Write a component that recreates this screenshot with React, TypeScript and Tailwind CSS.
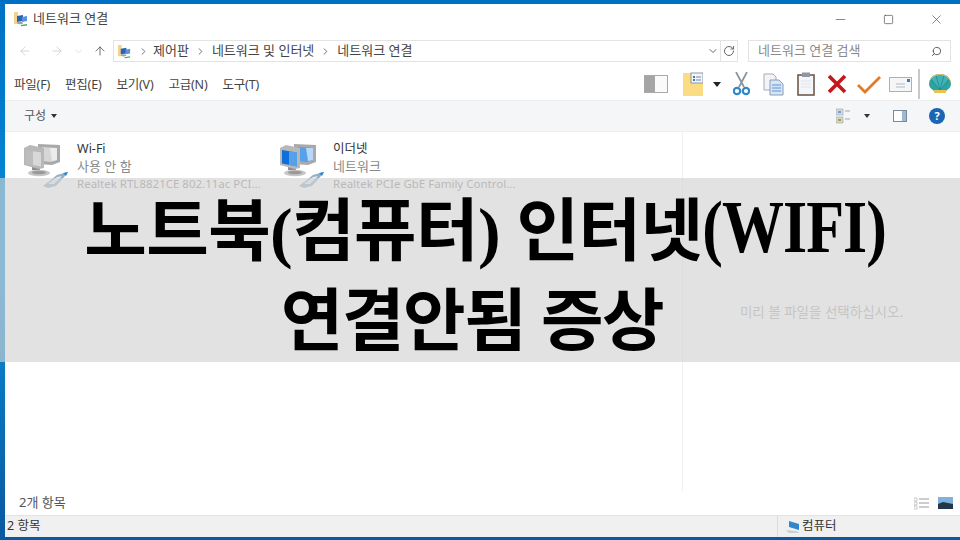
import React from "react";
import { ArrowLeft, ArrowRight, ArrowUp, ChevronDown, ChevronRight, RotateCw, Search, Minus, Square, X } from "lucide-react";

const sans = { fontFamily: '"Noto Sans","Noto Sans CJK KR",sans-serif' };

function NetFolder({ size = 16 }: { size?: number }) {
  return (
    <svg width={size} height={size} viewBox="0 0 16 16" className="shrink-0">
      <path d="M1 1h4v12H1z" fill="#f0d58a" />
      <path d="M4 5l6-1v6l-6 1z" fill="#2b62b8" />
      <path d="M9 6l5-1v5l-5 1z" fill="#5a92d8" />
      <ellipse cx="7" cy="12" rx="3" ry="1.2" fill="#9aa4ae" />
      <path d="M8 14l6-1v1.5l-6 .8z" fill="#3da86a" />
    </svg>
  );
}

function Computers({ blue }: { blue?: boolean }) {
  const back = blue ? "#5aa0e6" : "#d6d6d6";
  const backLight = blue ? "#b7d8f6" : "#ececec";
  const front = blue ? "#0f6fd8" : "#bdbdbd";
  const frontLight = blue ? "#6fb2f0" : "#e2e2e2";
  return (
    <svg width="50" height="50" viewBox="0 0 50 50" className="shrink-0">
      <path d="M16 5l22 1v17l-8 3-14-1z" fill="#a9a9a9" />
      <path d="M20 8l15 1v12l-6 2-9-1z" fill={back} />
      <path d="M28 9l7 0v12l-5 1z" fill={backLight} />
      <path d="M2 9l6-3 14 3v20l-5 1L2 26z" fill="#b8b8b8" />
      <path d="M4 11l15 2.5v14L4 24.5z" fill={front} />
      <path d="M11 12.2l8 1.3v14l-8-1.5z" fill={frontLight} opacity="0.75" />
      <path d="M10 28l8 2v2l-8-1z" fill="#8f8f8f" />
      <ellipse cx="17" cy="34" rx="11" ry="3.2" fill="#c6c6c6" />
      <ellipse cx="17" cy="33.5" rx="7" ry="1.8" fill="#9a9a9a" />
      <path d="M21 47l14-11 11-3-3 4-9 10-8 2z" fill="#8fb0c8" />
      <path d="M26 45l9-7 5-1-8 8z" fill="#e6eef4" />
      <path d="M41 34l5-1-2 4z" fill="#2a86cf" />
    </svg>
  );
}

function Item({ name, status, dev, blue }: { name: string; status: string; dev: string; blue?: boolean }) {
  return (
    <div className="flex w-[256px] gap-[5px]">
      <Computers blue={blue} />
      <div className="flex flex-col text-[13px] leading-[17.5px] pt-[1px]">
        <span className="text-[#333] text-[12.5px]">{name}</span>
        <span className="text-[#8a8a8a]">{status}</span>
        <span className="text-[#8a8a8a] text-[11.5px] whitespace-nowrap">{dev}</span>
      </div>
    </div>
  );
}

function Tools() {
  return (
    <div className="flex items-center h-full">
      <svg width="24" height="18" viewBox="0 0 24 18" className="mr-[15px]">
        <rect x="0.5" y="0.5" width="23" height="17" fill="#fafafa" stroke="#a8a8a8" />
        <rect x="1" y="1" width="10" height="16" fill="#a5a5a5" />
      </svg>
      <svg width="20" height="24" viewBox="0 0 20 24" className="mr-[10px]">
        <path d="M0 1h8v2h12v21H0z" fill="#fcdc83" />
        <rect x="8" y="1" width="12" height="10" fill="#f3f5f7" stroke="#8b99a6" />
        <path d="M10 4h2v2h-2zM10 7h2v2h-2z" fill="#3a78c2" />
        <path d="M13 5h5M13 8h5" stroke="#6a8ab0" />
      </svg>
      <svg width="8" height="5" viewBox="0 0 8 5" className="mr-[12px]"><path d="M0 0h8L4 5z" fill="#222" /></svg>
      <svg width="17" height="24" viewBox="0 0 17 24" className="mr-[13px]">
        <path d="M3 0l8 15M14 0L6 15" stroke="#8d959c" strokeWidth="1.8" fill="none" />
        <circle cx="4" cy="19" r="3.2" fill="none" stroke="#2f88c8" strokeWidth="2.2" />
        <circle cx="13" cy="19" r="3.2" fill="none" stroke="#2f88c8" strokeWidth="2.2" />
      </svg>
      <svg width="21" height="23" viewBox="0 0 21 23" className="mr-[13px]">
        <path d="M1 1h9l3 3v13H1z" fill="#f2f4f7" stroke="#a4adb8" />
        <path d="M7 7h9l4 4v11H7z" fill="#d7e5f6" stroke="#8a9db5" />
        <path d="M9 12h9M9 15h9M9 18h9" stroke="#5b93d6" />
      </svg>
      <svg width="18" height="24" viewBox="0 0 18 24" className="mr-[12px]">
        <rect x="1" y="3" width="16" height="20" fill="#f4f6f9" stroke="#6e5a4b" strokeWidth="1.6" />
        <rect x="5" y="0.5" width="8" height="4.5" fill="#8f98a2" />
        <path d="M4 9h10M4 12h10M4 15h10" stroke="#dfe5ec" />
      </svg>
      <svg width="20" height="20" viewBox="0 0 20 20" className="mr-[10px]">
        <path d="M2 2l16 16M18 2L2 18" stroke="#c4161c" strokeWidth="3.6" />
      </svg>
      <svg width="24" height="19" viewBox="0 0 24 19" className="mr-[8px]">
        <path d="M1 10l7 7L23 2" stroke="#e07b2a" strokeWidth="2.8" fill="none" />
      </svg>
      <svg width="23" height="15" viewBox="0 0 23 15" className="mr-[6px]">
        <rect x="0.5" y="0.5" width="22" height="14" fill="#f5f6f8" stroke="#a9b2bb" />
        <path d="M7 7h9M7 10h9" stroke="#b4bcc5" />
        <rect x="18" y="2" width="3" height="3" fill="#3a78c2" />
      </svg>
      <div className="w-[2px] h-[30px] bg-[#c8c8c8] mr-[8px]" />
      <svg width="24" height="22" viewBox="0 0 24 22">
        <path d="M12 1c6 0 11 4 11 10 0 3-2 5-4 6l-2 3H7l-2-3C3 16 1 14 1 11 1 5 6 1 12 1z" fill="#2fa3a0" />
        <path d="M12 17L3 5c2-3 5-4 9-4s7 1 9 4z" fill="#48b7c4" opacity="0.7" />
        <path d="M12 17L8 2M12 17l4-15M12 17L3 7M12 17l9-10" stroke="#1f8a8c" strokeWidth="0.8" />
        <path d="M7 20h10l2-3H5z" fill="#e9c44c" />
        <path d="M12 1c6 0 11 4 11 10l-1-3C20 4 16 2 12 2S4 4 2 8l-1 3C1 5 6 1 12 1z" fill="#e6c15c" />
      </svg>
    </div>
  );
}

export default function App() {
  return (
    <div className="relative w-[960px] h-[540px] overflow-hidden bg-gradient-to-b from-[#0070c4] via-[#0a8ed8] to-[#0a58a0] pl-[5px] pt-[4px] pb-[3px]" style={sans}>
      <div className="bg-white w-[955px] h-[533px] flex flex-col text-[#333]">
        <div className="h-[30px] flex items-center pl-[8px] shrink-0">
          <NetFolder />
          <span className="ml-[4px] text-[13px] text-[#444]">네트워크 연결</span>
          <div className="ml-auto flex items-center text-[#444]">
            <Minus size={15} strokeWidth={1} className="mr-[35px]" />
            <Square size={11} strokeWidth={1.4} className="mr-[35px]" />
            <X size={15} strokeWidth={1} className="mr-[16px]" />
          </div>
        </div>
        <div className="h-[34px] flex items-center shrink-0 pl-[13px] text-[#c4c4c4]">
          <ArrowLeft size={14} strokeWidth={1.2} />
          <ArrowRight size={14} strokeWidth={1.2} className="ml-[18px]" />
          <ChevronDown size={11} strokeWidth={1.2} className="ml-[9px]" />
          <ArrowUp size={14} strokeWidth={1.4} className="ml-[9px] text-[#555]" />
          <div className="ml-[6px] w-[625px] h-[22px] border border-[#e3e3e3] flex items-center pl-[3px] text-[13px] text-[#444]">
            <NetFolder size={15} />
            <ChevronRight size={11} className="ml-[6px] text-[#666]" />
            <span className="ml-[4px]">제어판</span>
            <ChevronRight size={11} className="ml-[6px] text-[#666]" />
            <span className="ml-[6px]">네트워크 및 인터넷</span>
            <ChevronRight size={11} className="ml-[6px] text-[#666]" />
            <span className="ml-[6px]">네트워크 연결</span>
            <ChevronDown size={12} className="ml-auto mr-[1px] text-[#666]" />
            <div className="w-[17px] h-full border-l border-[#e3e3e3] flex items-center justify-center">
              <RotateCw size={12} className="text-[#666]" />
            </div>
          </div>
          <div className="ml-[10px] w-[203px] h-[22px] border border-[#e3e3e3] flex items-center pl-[9px] pr-[8px] text-[13px] text-[#8a8a8a]">
            <span>네트워크 연결 검색</span>
            <Search size={11} strokeWidth={2} className="ml-auto text-[#555] -scale-x-100" />
          </div>
        </div>
        <div className="h-[32px] flex items-center shrink-0 pl-[9px] pr-[8px] text-[12.5px] text-[#444]">
          <div className="flex gap-[15px] pt-[3px] tracking-[-0.2px]">
            <span>파일(F)</span><span>편집(E)</span><span>보기(V)</span><span>고급(N)</span><span>도구(T)</span>
          </div>
          <div className="ml-auto h-full"><Tools /></div>
        </div>
        <div className="h-[32px] flex items-center shrink-0 bg-[#f5f6f7] border-y border-[#efefef] pl-[19px] text-[12px] text-[#555]">
          <span>구성</span>
          <svg width="6" height="4" viewBox="0 0 6 4" className="ml-[5px]"><path d="M0 0h6L3 4z" fill="#333" /></svg>
          <div className="ml-auto flex items-center pr-[15px]">
            <svg width="15" height="16" viewBox="0 0 15 16" className="mr-[13px]">
              <rect x="0" y="1" width="7" height="6" fill="#cfdbe6" stroke="#8d9aa6" strokeWidth="0.5" />
              <rect x="0" y="9" width="7" height="6" fill="#dcd9b8" stroke="#8d9aa6" strokeWidth="0.5" />
              <path d="M2 4h3" stroke="#2a5e9e" />
              <path d="M2 12h3" stroke="#5a6b3a" />
              <path d="M9 3h5M9 11h5" stroke="#a5a5a5" />
            </svg>
            <svg width="6" height="4" viewBox="0 0 6 4" className="mr-[23px]"><path d="M0 0h6L3 4z" fill="#333" /></svg>
            <svg width="14" height="12" viewBox="0 0 14 12" className="mr-[22px]">
              <rect x="0.5" y="0.5" width="13" height="11" fill="#fff" stroke="#7b8a9a" />
              <rect x="9" y="1" width="4" height="10" fill="#9db8d4" />
            </svg>
            <div className="w-[16px] h-[16px] rounded-full bg-[#1a66b5] text-white text-[11px] font-bold flex items-center justify-center">?</div>
          </div>
        </div>
        <div className="flex-1 flex min-h-0">
          <div className="w-[678px] flex pt-[7px] pl-[17px] border-r border-[#f0f0f0]">
            <Item name="Wi-Fi" status="사용 안 함" dev="Realtek RTL8821CE 802.11ac PCI..." />
            <Item name="이더넷" status="네트워크" dev="Realtek PCIe GbE Family Control..." blue />
          </div>
          <div className="flex-1 flex items-center justify-center pt-[1px]">
            <span className="text-[13.5px] text-[#aaa]">미리 볼 파일을 선택하십시오.</span>
          </div>
        </div>
        <div className="h-[24px] flex items-center shrink-0 pl-[14px] pr-[7px] text-[13px] text-[#555]">
          <span>2개 항목</span>
          <div className="ml-auto flex gap-[8px] items-center">
            <svg width="16" height="13" viewBox="0 0 16 13">
              <path d="M0 1h3v3H0zM0 5h3v3H0zM0 9h3v3H0z" fill="none" stroke="#a8a8a8" strokeWidth="0.6" />
              <path d="M5 2h10M5 6h10M5 10h10" stroke="#9a9a9a" />
            </svg>
            <svg width="15" height="12" viewBox="0 0 15 12">
              <rect width="15" height="12" fill="#7eb1dc" />
              <path d="M0 7l5-2 10 2v5H0z" fill="#22384a" />
            </svg>
          </div>
        </div>
        <div className="h-[22px] flex items-center shrink-0 bg-[#f0f0f0] border-t border-[#e3e3e3] pl-[2px] text-[12.5px] text-[#333]">
          <span>2 항목</span>
          <div className="ml-auto w-[183px] h-full border-l border-[#dcdcdc] flex items-center pl-[8px]">
            <svg width="15" height="14" viewBox="0 0 15 14" className="mr-[1px]">
              <path d="M3 1l10 3v6L3 7z" fill="#2f87cf" />
              <path d="M0 10l10 1 4 2H3z" fill="#c9d1d8" />
            </svg>
            <span>컴퓨터</span>
          </div>
        </div>
      </div>
      <div
        className="absolute left-0 top-[178px] w-[960px] h-[184px] bg-[#d3d3d3]/65 flex flex-col items-center text-black font-bold"
        style={{ fontFamily: '"Liberation Serif","Noto Sans CJK KR",serif' }}
      >
        <div className="text-[68px] leading-[62px] mt-[23px] whitespace-nowrap ml-[10px] tracking-[-0.6px]">
          노트북(컴퓨터) 인터넷<span className="inline-block text-[62px] scale-y-[1.2] origin-[50%_78%] -translate-y-[4px] font-semibold tracking-[-1px]">(WIFI)</span>
        </div>
        <div className="text-[68px] leading-[62px] mt-[26px] whitespace-nowrap mr-[16px] tracking-[-1.4px]">연결안됨 증상</div>
      </div>
    </div>
  );
}
